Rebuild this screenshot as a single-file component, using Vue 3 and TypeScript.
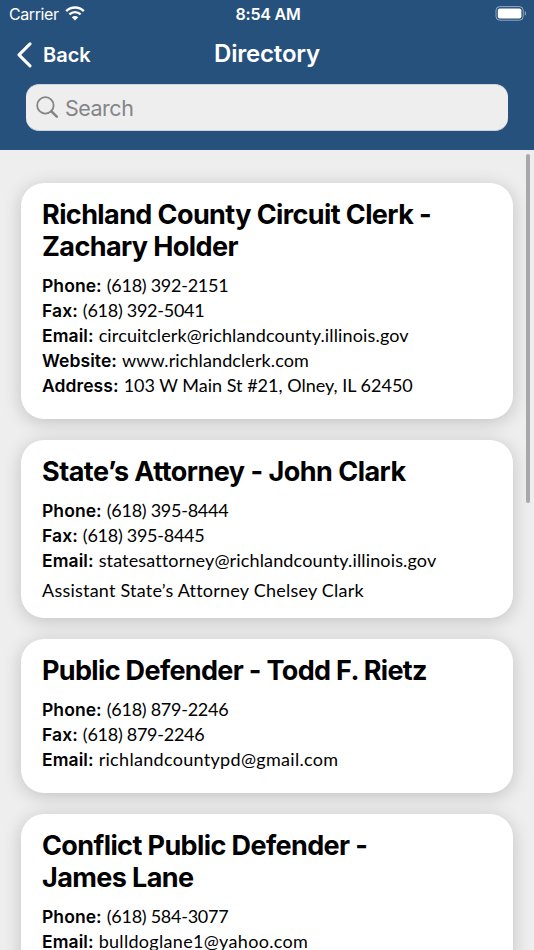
<script setup lang="ts">
interface Field {
  label: string
  value: string
  fit: string
}

interface Entry {
  title: string[]
  fit: string
  fields: Field[]
  note?: string
}

const entries: Entry[] = [
  {
    title: ['Richland County Circuit Clerk -', 'Zachary Holder'],
    fit: 'regular',
    fields: [
      { label: 'Phone:', value: '(618) 392-2151', fit: 'number' },
      { label: 'Fax:', value: '(618) 392-5041', fit: 'number' },
      { label: 'Email:', value: 'circuitclerk@richlandcounty.illinois.gov', fit: 'mail' },
      { label: 'Website:', value: 'www.richlandclerk.com', fit: 'site' },
      { label: 'Address:', value: '103 W Main St #21, Olney, IL 62450', fit: 'place' },
    ],
  },
  {
    title: ['State’s Attorney - John Clark'],
    fit: 'loose',
    fields: [
      { label: 'Phone:', value: '(618) 395-8444', fit: 'number' },
      { label: 'Fax:', value: '(618) 395-8445', fit: 'number' },
      { label: 'Email:', value: 'statesattorney@richlandcounty.illinois.gov', fit: 'mail' },
    ],
    note: 'Assistant State’s Attorney Chelsey Clark',
  },
  {
    title: ['Public Defender - Todd F. Rietz'],
    fit: 'tight',
    fields: [
      { label: 'Phone:', value: '(618) 879-2246', fit: 'number' },
      { label: 'Fax:', value: '(618) 879-2246', fit: 'number' },
      { label: 'Email:', value: 'richlandcountypd@gmail.com', fit: 'mail-wide' },
    ],
  },
  {
    title: ['Conflict Public Defender -', 'James Lane'],
    fit: 'regular',
    fields: [
      { label: 'Phone:', value: '(618) 584-3077', fit: 'number' },
      { label: 'Email:', value: 'bulldoglane1@yahoo.com', fit: 'mail-wide' },
    ],
  },
]
</script>

<template>
  <div class="screen">
    <header class="header">
      <div class="status">
        <div class="carrier">
          <span>Carrier</span>
          <svg class="wifi" width="20" height="15" viewBox="0 0 20 15" fill="none">
            <path d="M1.2 5.1 A12.6 12.6 0 0 1 18.8 5.1" stroke="#fff" stroke-width="2.4" />
            <path d="M4.4 8.4 A8 8 0 0 1 15.6 8.4" stroke="#fff" stroke-width="2.3" />
            <path d="M10 14.4 L6.8 11.2 A4.6 4.6 0 0 1 13.2 11.2 Z" fill="#fff" />
          </svg>
        </div>
        <span class="time">8:54 AM</span>
        <svg class="battery" width="32" height="15" viewBox="0 0 32 15" fill="none">
          <rect x="1" y="0.6" width="27.2" height="13.6" rx="3.8" stroke="#fff" stroke-opacity=".5" />
          <rect x="2.8" y="2.4" width="23.6" height="10" rx="2" fill="#fff" />
          <path d="M29.8 5 C31.6 5.8 31.6 9 29.8 9.8 Z" fill="#fff" fill-opacity=".5" />
        </svg>
      </div>
      <nav class="nav">
        <button class="back" type="button">
          <svg width="16" height="26" viewBox="0 0 16 26" fill="none">
            <path d="M14 1.9 L3 12.9 L14 23.9" stroke="#fff" stroke-width="3" stroke-linecap="round" stroke-linejoin="round" />
          </svg>
          <span>Back</span>
        </button>
        <h1>Directory</h1>
      </nav>
      <div class="search">
        <svg width="24" height="24" viewBox="0 0 24 24" fill="none" stroke="#858589">
          <circle cx="9.4" cy="9.4" r="8.2" stroke-width="1.8" />
          <path d="M15.3 15.3 L20.8 20.6" stroke-width="2.6" stroke-linecap="round" />
        </svg>
        <span>Search</span>
      </div>
    </header>

    <main class="list">
      <article v-for="entry in entries" :key="entry.title[0]" class="card" :class="{ noted: entry.note }">
        <h2 :class="entry.fit">
          <span v-for="line in entry.title" :key="line">{{ line }}</span>
        </h2>
        <p v-for="field in entry.fields" :key="field.label" class="field">
          <b>{{ field.label }}</b><span :class="field.fit">{{ field.value }}</span>
        </p>
        <p v-if="entry.note" class="note">{{ entry.note }}</p>
      </article>
    </main>
    <div class="scrollbar"></div>
  </div>
</template>

<style>
body {
  background: #eee;
  overflow: hidden;
}
</style>

<style scoped>
.screen {
  position: relative;
  height: 950px;
  overflow: hidden;
  background: #eee;
  color: #000;
  font-family: Inter, "Liberation Sans", sans-serif;
}

.header {
  box-sizing: border-box;
  height: 150px;
  background: #27517d;
  color: #fff;
}

.status {
  display: grid;
  grid-template-columns: 1fr auto 1fr;
  align-items: center;
  height: 28px;
  padding: 0 7px 0 9px;
  font-size: 16px;
}

.carrier {
  display: flex;
  align-items: center;
  gap: 6px;
  letter-spacing: -0.4px;
}

.wifi {
  margin-top: -2px;
}

.time {
  font-weight: 600;
  letter-spacing: -0.2px;
}

.battery {
  justify-self: end;
  margin-top: -1px;
}

.nav {
  display: grid;
  grid-template-columns: 1fr auto 1fr;
  align-items: center;
  height: 52px;
  padding: 0 16px;
}

.back {
  display: flex;
  align-items: center;
  gap: 11px;
  padding: 1px 0 0;
  border: 0;
  background: none;
  color: #fff;
  font: 600 20px/26px Inter, sans-serif;
}

h1 {
  margin: 0;
  font-size: 24px;
  font-weight: 600;
  line-height: 52px;
  letter-spacing: -0.2px;
}

.search {
  box-sizing: border-box;
  display: flex;
  align-items: center;
  gap: 5px;
  height: 47px;
  margin: 4px 26px 0;
  padding: 0 10px;
  border: 1px solid #cdd3da;
  border-width: 1px 0;
  border-radius: 13px;
  background: #eee;
  color: #858589;
  font-size: 21.5px;
  letter-spacing: -0.5px;
}

.list {
  display: flex;
  flex-direction: column;
  gap: 21px;
  padding: 33px 21px;
}

.card {
  padding: 16px 21px 21px;
  border-radius: 23px;
  background: #fff;
  box-shadow: 0 3px 18px rgba(0, 0, 0, 0.19);
}

.card.noted {
  padding-bottom: 15px;
}

h2 {
  margin: 0 0 10px;
  font-size: 27px;
  font-weight: 700;
  line-height: 32px;
  letter-spacing: -0.6px;
}

h2.loose {
  letter-spacing: -0.52px;
}

h2.tight {
  letter-spacing: -0.66px;
}

h2 span {
  display: block;
  width: max-content;
}

.field,
.note {
  display: flex;
  align-items: baseline;
  gap: 5px;
  height: 25px;
  margin: 0;
  font-family: Lato, sans-serif;
  font-size: 18px;
  line-height: 25px;
  white-space: nowrap;
}

.field b {
  font-family: Inter, sans-serif;
  font-size: 17.5px;
  font-weight: 600;
  letter-spacing: 0.08px;
}

.number {
  letter-spacing: -0.27px;
}

.mail {
  letter-spacing: 0.14px;
}

.mail-wide {
  letter-spacing: 0.31px;
}

.site {
  letter-spacing: 0.1px;
}

.note {
  margin-top: 5px;
  letter-spacing: 0.22px;
}

.scrollbar {
  position: absolute;
  top: 154px;
  right: 4px;
  width: 4px;
  height: 349px;
  border-radius: 2px;
  background: #a8a8a8;
}
</style>
